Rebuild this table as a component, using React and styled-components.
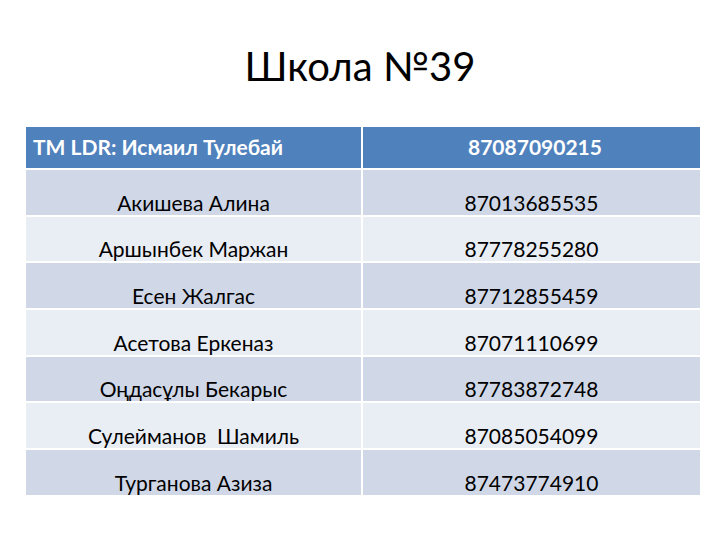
import React from "react";
import styled, { createGlobalStyle } from "styled-components";

const Global = createGlobalStyle`
  html, body { margin: 0; padding: 0; background: #ffffff; }
  body { font-family: Lato, "Open Sans", sans-serif; }
`;

const Slide = styled.div`
  width: 720px;
  height: 540px;
  background: #ffffff;
  display: flex;
  flex-direction: column;
  overflow: hidden;
`;

const Title = styled.h1`
  margin: 0;
  height: 127px;
  box-sizing: border-box;
  padding-top: 38px;
  text-align: center;
  font-weight: 400;
  font-size: 40px;
  line-height: 56px;
  color: #000;
`;

const Table = styled.div`
  margin-left: 26px;
  width: 674px;
  display: grid;
  grid-template-columns: 335px 337px;
  grid-template-rows: 41px repeat(7, 44.7px);
  column-gap: 2px;
  row-gap: 2px;
  background: #ffffff;
`;

const Cell = styled.div`
  box-sizing: border-box;
  display: flex;
  align-items: ${(p) => (p.$head ? "center" : "flex-end")};
  justify-content: ${(p) => (p.$left ? "flex-start" : "center")};
  padding: ${(p) => (p.$head ? "0 0 3px 7px" : "0 0 0 0")};
  background: ${(p) => (p.$head ? "#4f81bd" : p.$dark ? "#d0d8e8" : "#e9edf4")};
  color: ${(p) => (p.$head ? "#ffffff" : "#000000")};
  font-weight: ${(p) => (p.$head ? 700 : 400)};
  font-size: 21px;
  line-height: 25px;
  white-space: pre;
`;

const rows = [
  ["Акишева Алина", "87013685535"],
  ["Аршынбек Маржан", "87778255280"],
  ["Есен Жалгас", "87712855459"],
  ["Асетова Еркеназ", "87071110699"],
  ["Оңдасұлы Бекарыс", "87783872748"],
  ["Сулейманов  Шамиль", "87085054099"],
  ["Турганова Азиза", "87473774910"],
];

export default function App() {
  return (
    <Slide>
      <Global />
      <Title>Школа №39</Title>
      <Table>
        <Cell $head $left>TM LDR: Исмаил Тулебай</Cell>
        <Cell $head>87087090215</Cell>
        {rows.map(([name, phone], i) => (
          <React.Fragment key={name}>
            <Cell $dark={i % 2 === 0}>{name}</Cell>
            <Cell $dark={i % 2 === 0}>{phone}</Cell>
          </React.Fragment>
        ))}
      </Table>
    </Slide>
  );
}
